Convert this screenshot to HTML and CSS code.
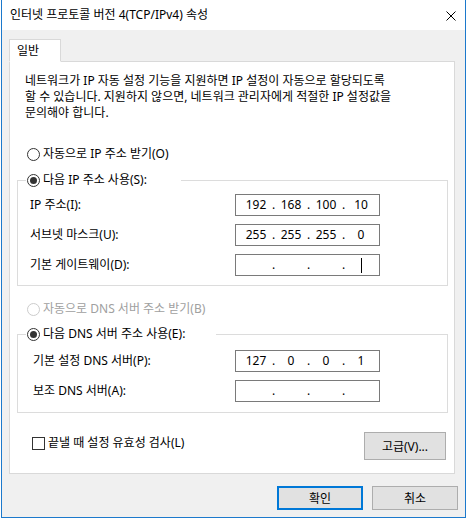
FILE: index.html
```html
<!DOCTYPE html>
<html lang="ko">
<head>
    <meta charset="UTF-8">
    <title>인터넷 프로토콜 버전 4(TCP/IPv4) 속성</title>
    <link rel="stylesheet" href="styles.css">
</head>
<body>
    <div class="window">
        <div class="titlebar">
            <span class="title">인터넷 프로토콜 버전 4(TCP/IPv4) 속성</span>
            <svg class="close" width="10" height="10" viewBox="0 0 10 10">
                <path d="M0.5 0.5L9.5 9.5M9.5 0.5L0.5 9.5" stroke="#000" stroke-width="1" fill="none"/>
            </svg>
        </div>

        <div class="dialog">
            <div class="tabs">
                <div class="tab">일반</div>
            </div>

            <div class="panel">
                <p class="intro">네트워크가 IP 자동 설정 기능을 지원하면 IP 설정이 자동으로 할당되도록<br>할 수 있습니다. 지원하지 않으면, 네트워크 관리자에게 적절한 IP 설정값을<br>문의해야 합니다.</p>

                <div class="option"><span class="radio"></span>자동으로 IP 주소 받기(O)</div>

                <fieldset class="group group-ip">
                    <legend class="option"><span class="radio checked"></span>다음 IP 주소 사용(S):</legend>
                    <div class="field">
                        <span class="label">IP 주소(I):</span>
                        <div class="ipbox"><span class="oct">192</span><span class="dot">.</span><span class="oct">168</span><span class="dot">.</span><span class="oct">100</span><span class="dot">.</span><span class="oct">10</span></div>
                    </div>
                    <div class="field">
                        <span class="label">서브넷 마스크(U):</span>
                        <div class="ipbox"><span class="oct">255</span><span class="dot">.</span><span class="oct">255</span><span class="dot">.</span><span class="oct">255</span><span class="dot">.</span><span class="oct">0</span></div>
                    </div>
                    <div class="field">
                        <span class="label">기본 게이트웨이(D):</span>
                        <div class="ipbox"><span class="oct"></span><span class="dot">.</span><span class="oct"></span><span class="dot">.</span><span class="oct"></span><span class="dot">.</span><span class="oct"><span class="caret"></span></span></div>
                    </div>
                </fieldset>

                <div class="option disabled"><span class="radio"></span>자동으로 DNS 서버 주소 받기(B)</div>

                <fieldset class="group group-dns">
                    <legend class="option"><span class="radio checked"></span>다음 DNS 서버 주소 사용(E):</legend>
                    <div class="field">
                        <span class="label">기본 설정 DNS 서버(P):</span>
                        <div class="ipbox"><span class="oct">127</span><span class="dot">.</span><span class="oct">0</span><span class="dot">.</span><span class="oct">0</span><span class="dot">.</span><span class="oct">1</span></div>
                    </div>
                    <div class="field">
                        <span class="label">보조 DNS 서버(A):</span>
                        <div class="ipbox"><span class="oct"></span><span class="dot">.</span><span class="oct"></span><span class="dot">.</span><span class="oct"></span><span class="dot">.</span><span class="oct"></span></div>
                    </div>
                </fieldset>

                <div class="panel-foot">
                    <div class="check"><span class="checkbox"></span>끝낼 때 설정 유효성 검사(L)</div>
                    <button class="btn btn-advanced">고급(V)...</button>
                </div>
            </div>

            <div class="footer">
                <button class="btn btn-default">확인</button>
                <button class="btn">취소</button>
            </div>
        </div>
    </div>
</body>
</html>
```

FILE: styles.css
```css
body {
    margin: 0;
    background-color: #ffffff;
    font-family: "Noto Sans", "Noto Sans CJK KR", sans-serif;
    font-size: 12px;
    color: #000;
}

.window {
    box-sizing: border-box;
    width: 465px;
    margin-left: 1px;
    border: 1px solid #1c79cc;
    border-top: none;
    background-color: #f0f0f0;
}

/* Title bar */
.titlebar {
    height: 30px;
    display: flex;
    align-items: center;
    justify-content: space-between;
    padding: 0 9px 0 8px;
    background-color: #ffffff;
}

.title {
    line-height: 16px;
}

.close {
    display: block;
    margin-top: 1px;
}

/* Dialog body */
.dialog {
    padding: 9px 7px 7px 7px;
}

.tabs {
    display: flex;
}

.tab {
    position: relative;
    z-index: 1;
    box-sizing: border-box;
    width: 52px;
    height: 23px;
    margin-bottom: -1px;
    padding-left: 7px;
    line-height: 21px;
    background-color: #ffffff;
    border: 1px solid #d9d9d9;
    border-bottom-color: #ffffff;
}

.panel {
    margin-right: 3px;
    padding: 0 6px 13px 7px;
    background-color: #ffffff;
    border: 1px solid #d9d9d9;
}

.intro {
    margin: 11px 0 0 8px;
    line-height: 16px;
    white-space: nowrap;
}

/* Radio buttons */
.option {
    display: flex;
    align-items: center;
    height: 16px;
    line-height: 16px;
    white-space: nowrap;
}

.panel > .option {
    margin: 25px 0 0 10px;
}

.panel > .option.disabled {
    margin-top: 15px;
}

.option.disabled {
    color: #a0a0a0;
}

.radio {
    box-sizing: border-box;
    width: 13px;
    height: 13px;
    margin-right: 3px;
    border: 1px solid #333;
    border-radius: 50%;
    display: flex;
    align-items: center;
    justify-content: center;
    background-color: #fff;
}

.radio.checked::after {
    content: "";
    width: 7px;
    height: 7px;
    border-radius: 50%;
    background-color: #333;
}

.disabled .radio {
    border-color: #cccccc;
}

/* Group boxes */
.group {
    margin: 10px 0 0 0;
    padding: 6px 0 9px 8px;
    border: 1px solid #dcdcdc;
    min-width: 0;
}

.group legend {
    padding: 0 34px 0 1px;
}

.group-dns {
    margin-top: 9px;
    padding-top: 8px;
    padding-bottom: 10px;
}

.group-dns legend {
    padding-right: 31px;
}

.field {
    display: flex;
    align-items: center;
    height: 22px;
}

.field + .field {
    margin-top: 8px;
}

.label {
    box-sizing: border-box;
    width: 209px;
    padding-left: 4px;
    line-height: 16px;
}

.group-dns .label {
    padding-left: 7px;
}

.ipbox {
    box-sizing: border-box;
    width: 145px;
    height: 22px;
    padding-left: 5px;
    display: flex;
    align-items: center;
    border: 1px solid #7a7a7a;
    background-color: #fff;
    line-height: 16px;
}

.oct {
    width: 30px;
    text-align: center;
    display: flex;
    justify-content: center;
}

.dot {
    width: 5px;
    text-align: center;
}

.caret {
    width: 1px;
    height: 15px;
    background-color: #000;
}

/* Bottom of the panel */
.panel-foot {
    display: flex;
    justify-content: space-between;
    align-items: flex-start;
    margin-top: 19px;
    padding: 0 2px 0 15px;
}

.check {
    display: flex;
    align-items: center;
    margin-top: 3px;
    line-height: 16px;
}

.checkbox {
    box-sizing: border-box;
    width: 13px;
    height: 13px;
    margin-right: 3px;
    border: 1px solid #333;
    background-color: #fff;
}

/* Buttons */
.btn {
    box-sizing: border-box;
    width: 86px;
    height: 24px;
    padding: 0;
    font-family: inherit;
    font-size: 12px;
    color: #000;
    background-color: #e1e1e1;
    border: 1px solid #adadad;
}

.btn-advanced {
    width: 82px;
    height: 28px;
}

.btn-default {
    border: 2px solid #0078d7;
}

.footer {
    display: flex;
    justify-content: flex-end;
    gap: 9px;
    margin-top: 12px;
}
```
